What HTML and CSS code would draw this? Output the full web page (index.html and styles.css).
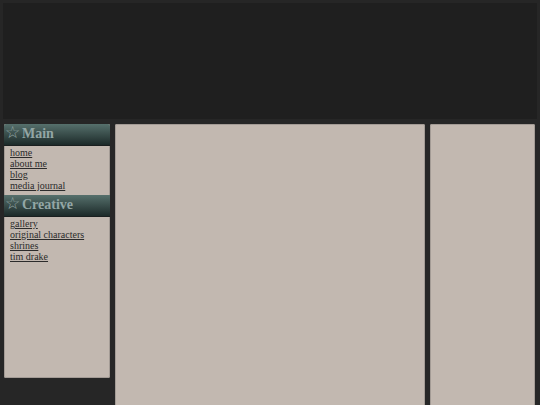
FILE: index.html
```html
<!DOCTYPE html>
<html>
<head>
<meta charset="utf-8">
<link rel="stylesheet" href="styles.css">
</head>
<body>
<div class="page">
  <div class="header"></div>
  <div class="columns">
    <div class="sidebar">
      <div class="nav-title"><span class="star">☆</span>Main</div>
      <ul class="nav-links">
        <li><a href="#">home</a></li>
        <li><a href="#">about me</a></li>
        <li><a href="#">blog</a></li>
        <li><a href="#">media journal</a></li>
      </ul>
      <div class="nav-title"><span class="star">☆</span>Creative</div>
      <ul class="nav-links">
        <li><a href="#">gallery</a></li>
        <li><a href="#">original characters</a></li>
        <li><a href="#">shrines</a></li>
        <li><a href="#">tim drake</a></li>
      </ul>
    </div>
    <div class="main"></div>
    <div class="aside"></div>
  </div>
</div>
</body>
</html>
```

FILE: styles.css
```css
html, body {
  margin: 0;
  padding: 0;
  background: #262626;
  height: 100%;
  overflow: hidden;
}
.page {
  padding: 3px 3px 0 3px;
  font-family: "Liberation Serif", "Times New Roman", serif;
}
.header {
  height: 116px;
  background: #1f1f1f;
}
.columns {
  display: flex;
  gap: 5px;
  margin-top: 5px;
  padding: 0 2px 0 1px;
  align-items: flex-start;
}
.sidebar {
  width: 106px;
  height: 254px;
  background: #c2b8b0;
  border-radius: 2px;
  box-shadow: 0 0 0 1px #a39b95 inset;
  overflow: hidden;
}
.nav-title {
  height: 22px;
  line-height: 18px;
  padding-left: 1px;
  font-size: 14px;
  font-weight: bold;
  color: #93a6a5;
  background: linear-gradient(#56706c, #1c2a29);
  border-bottom: 1px solid #1a1f1f;
  box-sizing: border-box;
  overflow: hidden;
}
.star {
  font-size: 17px;
  font-weight: normal;
  margin-right: 2px;
}
.nav-links {
  list-style: none;
  margin: 0;
  padding: 1px 0 4px 6px;
  font-size: 10px;
  line-height: 11px;
}
.nav-links a {
  color: #2b2b2b;
  text-decoration: underline;
}
.main {
  width: 310px;
  height: 300px;
  background: #c2b8b0;
  border-radius: 2px;
  box-shadow: 0 0 0 1px #a39b95 inset;
}
.aside {
  width: 105px;
  height: 300px;
  background: #c2b8b0;
  border-radius: 2px;
  box-shadow: 0 0 0 1px #a39b95 inset;
}
```
